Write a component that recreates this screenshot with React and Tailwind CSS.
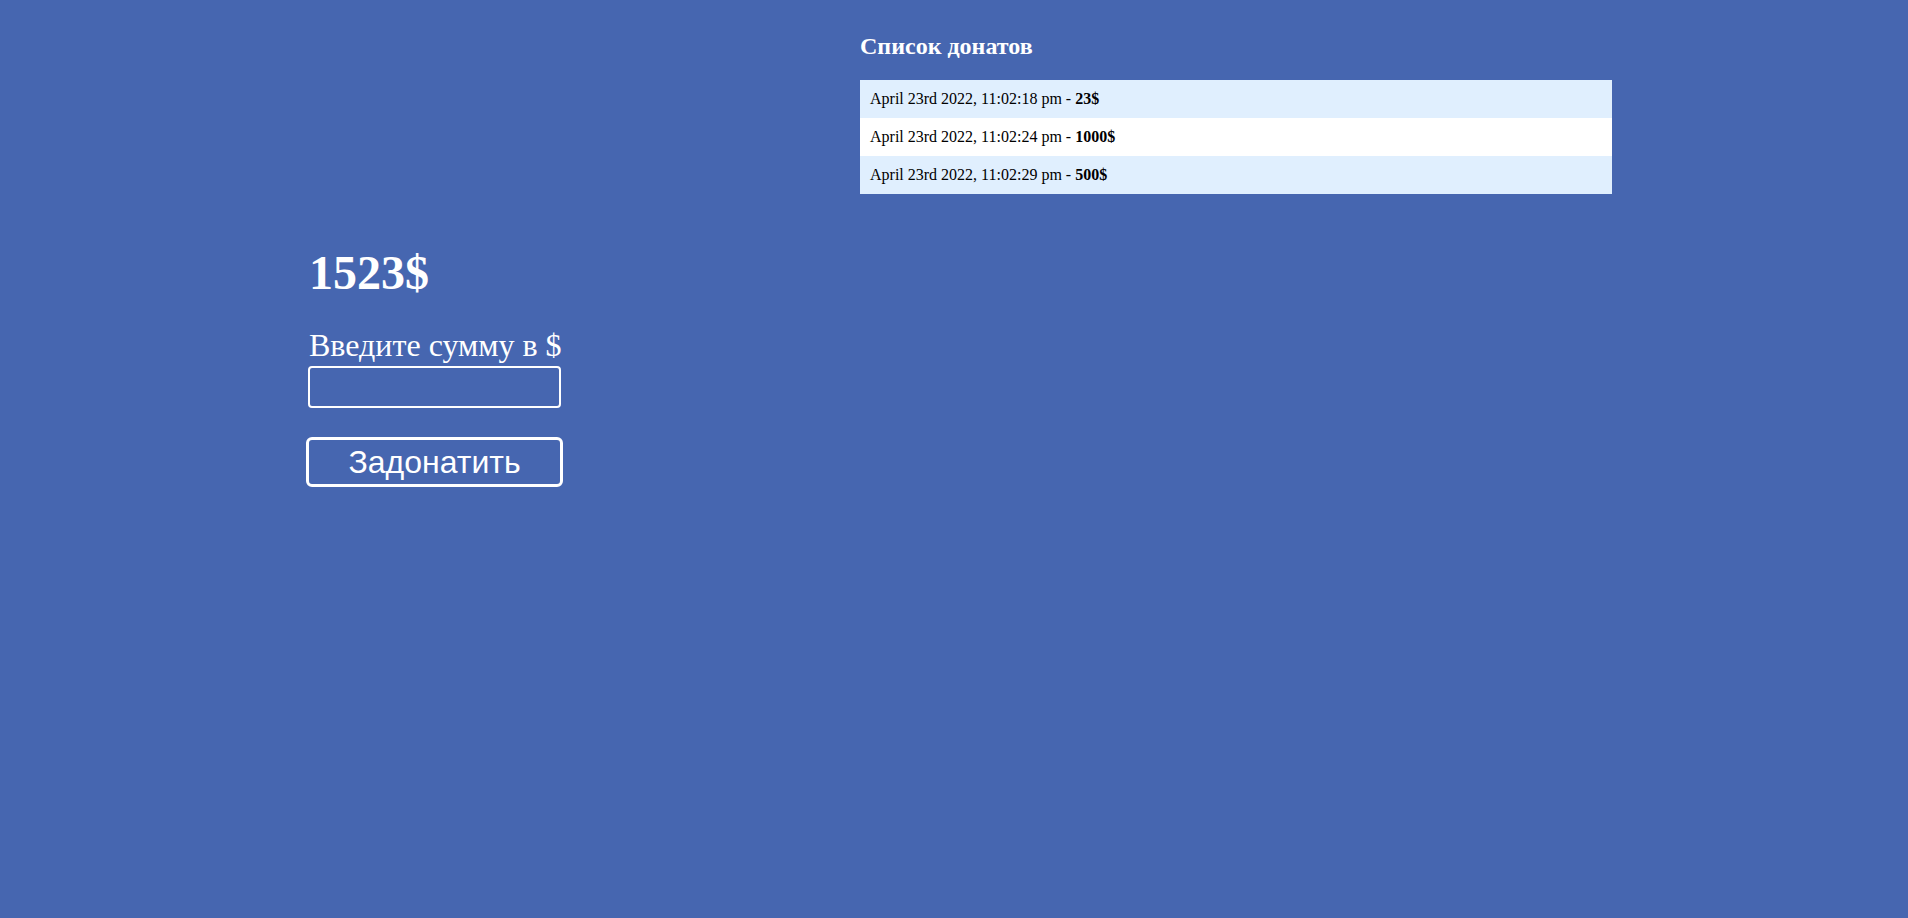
export default function App() {
  const donations = [
    { date: "April 23rd 2022, 11:02:18 pm", amount: "23$" },
    { date: "April 23rd 2022, 11:02:24 pm", amount: "1000$" },
    { date: "April 23rd 2022, 11:02:29 pm", amount: "500$" },
  ];
  return (
    <div
      className="min-h-[918px] w-full bg-[#4666b0] flex items-start pl-[309px]"
      style={{ fontFamily: '"Liberation Serif", "Times New Roman", serif' }}
    >
      <div className="w-[253px] pt-[245px] flex flex-col text-white">
        <h2 className="text-[48px] font-bold leading-[56px]">1523$</h2>
        <label className="mt-[26px] text-[32px] leading-[36px] whitespace-nowrap">Введите сумму в $</label>
        <input
          type="text"
          className="mt-[3px] -ml-[1px] h-[42px] w-[253px] rounded-[4px] border-2 border-white bg-transparent outline-none"
        />
        <button
          className="mt-[29px] -ml-[3px] h-[50px] w-[257px] rounded-[6px] border-[3px] border-white bg-transparent text-white text-[32px] leading-none"
          style={{ fontFamily: '"Liberation Sans", Arial, sans-serif' }}
        >
          Задонатить
        </button>
      </div>
      <div className="ml-[298px] w-[752px] pt-[31px]">
        <h3 className="text-[24px] font-bold text-white leading-[30px]">Список донатов</h3>
        <ul className="mt-[19px]">
          {donations.map((d, i) => (
            <li
              key={i}
              className={`h-[38px] flex items-center px-[10px] text-[16px] text-black ${
                i % 2 === 0 ? "bg-[#e0effe]" : "bg-white"
              }`}
            >
              <span>
                {d.date} - <b>{d.amount}</b>
              </span>
            </li>
          ))}
        </ul>
      </div>
    </div>
  );
}
